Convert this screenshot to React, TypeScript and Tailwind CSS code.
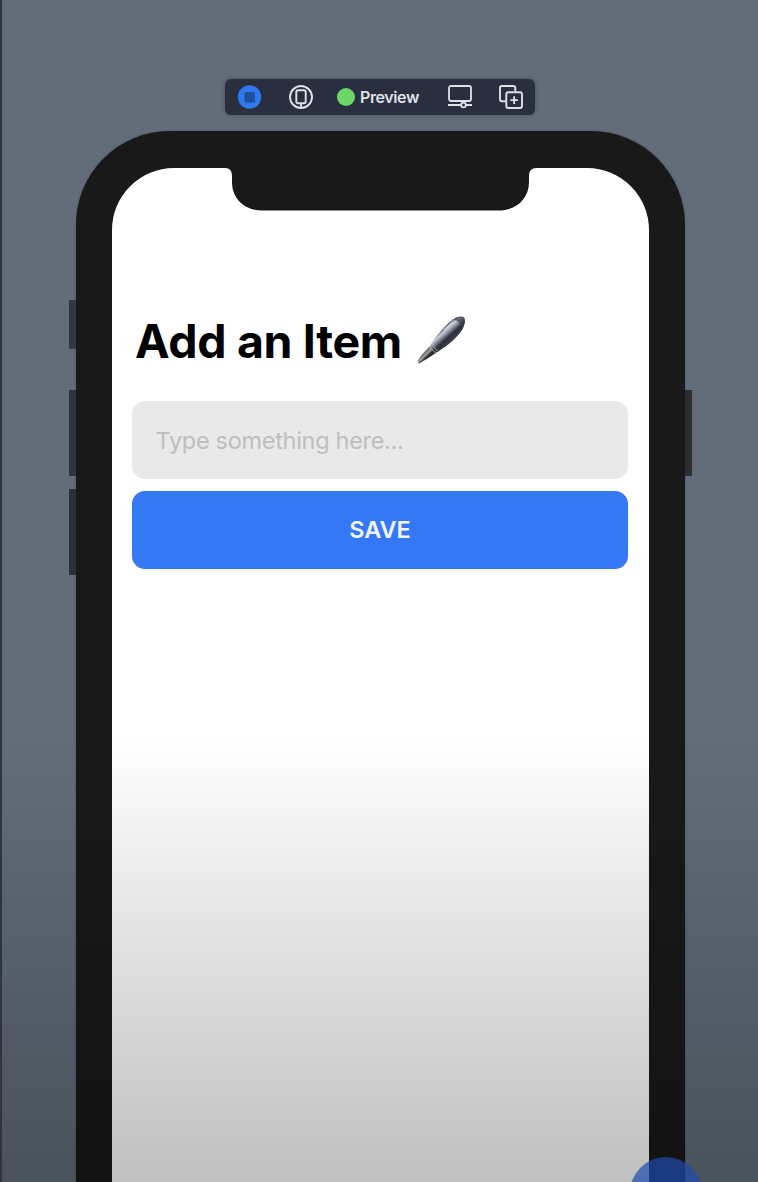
function Toolbar() {
  return (
    <div className="flex h-[36px] w-[310px] shrink-0 items-center rounded-[6px] bg-[#2a2f3f] pl-[12px] shadow-[0_0_4px_rgba(42,47,63,0.5)]">
      <svg width="25" height="26" viewBox="0 0 25 26" className="shrink-0">
        <circle cx="12.5" cy="13" r="11.7" fill="#2f78ee" />
        <rect x="7.5" y="8" width="10.5" height="10.5" rx="1" fill="#1f4f9f" />
      </svg>
      <svg width="26" height="26" viewBox="0 0 26 26" fill="none" stroke="#dfe1e7" strokeWidth="1.9" className="ml-[26px] shrink-0">
        <circle cx="13" cy="13" r="11" />
        <rect x="8.3" y="6.2" width="9.4" height="13" rx="1.8" />
        <path d="M13 19v5" />
      </svg>
      <div className="ml-[23px] flex w-[82px] shrink-0 items-center gap-[5px]">
        <span className="size-[18px] shrink-0 rounded-full bg-[#6ed569]" />
        <span className="font-['Inter',sans-serif] text-[16px] leading-[20px] font-semibold tracking-[-0.4px] text-[#dfe1e8]">Preview</span>
      </div>
      <svg width="26" height="26" viewBox="0 0 26 26" fill="none" stroke="#dfe1e7" strokeWidth="1.8" className="ml-[28px] shrink-0">
        <rect x="2" y="2" width="22" height="15" rx="2" />
        <path d="M1 21h13M19 21h6" />
        <circle cx="16.5" cy="21" r="2.4" />
      </svg>
      <svg width="26" height="26" viewBox="0 0 26 26" fill="none" stroke="#dfe1e7" strokeWidth="1.9" className="ml-[25px] shrink-0">
        <path d="M7.5 17.3H4a2 2 0 0 1-2-2V4a2 2 0 0 1 2-2h11.300a2 2 0 0 1 2 2v3.500" />
        <rect x="8.300" y="8.300" width="15.700" height="15.700" rx="2" />
        <path d="M16.150 12.300v7.700M12.300 16.150h7.700" />
      </svg>
    </div>
  );
}

function Pen() {
  return (
    <svg width="50" height="50" viewBox="0 0 50 50" className="shrink-0">
      <defs>
        <linearGradient id="barrel" gradientUnits="userSpaceOnUse" x1="23" y1="16" x2="33" y2="27">
          <stop offset="0" stopColor="#5f636f" />
          <stop offset="0.22" stopColor="#c9cedc" />
          <stop offset="0.45" stopColor="#7c808e" />
          <stop offset="0.68" stopColor="#2b2d39" />
          <stop offset="1" stopColor="#3c3e49" />
        </linearGradient>
        <linearGradient id="nib" gradientUnits="userSpaceOnUse" x1="7" y1="38" x2="12" y2="43">
          <stop offset="0" stopColor="#666666" />
          <stop offset="0.35" stopColor="#a4a4a4" />
          <stop offset="0.65" stopColor="#36363a" />
          <stop offset="1" stopColor="#202126" />
        </linearGradient>
      </defs>
      <path d="M13 31C19 22 27 11 36 4C41 0.500 46 -0.200 48 1.500C50 4.500 48.500 11 45 15.500C38 25 29 31.500 19 37.500Z" fill="url(#barrel)" />
      <path d="M37 3.500C41 0.500 46 -0.200 48 1.500C50 4.500 48.500 10 45 15C46 9 43 4.500 37 3.500Z" fill="#3a3e4b" opacity="0.7" />
      <path d="M13 31L19.500 37C14 41.500 8 44 3.500 47.500L1.500 47L2 44.500C5 39 8.500 36 13 31Z" fill="url(#nib)" />
      <path d="M13.500 30.500L19.600 37M15.500 28.500L21.500 35" stroke="#a5a5ac" strokeWidth="1" />
      <path d="M28 14L37 6" stroke="#e5e9f4" strokeWidth="1.500" opacity="0.65" />
    </svg>
  );
}

export default function App() {
  return (
    <div className="relative flex h-[1182px] w-[758px] flex-col items-center overflow-hidden border-l-2 border-[#303440] bg-[#626d79] pt-[79px]">
      <Toolbar />

      <div className="relative mt-[16px] h-[1100px] w-[609px] shrink-0 rounded-t-[94px] bg-[#191919] px-[36px] pt-[37px] shadow-[0_0_2px_rgba(45,50,62,0.6)]">
        <span className="absolute top-[169px] -left-[7px] h-[49px] w-[7px] bg-[#303841]" />
        <span className="absolute top-[259px] -left-[7px] h-[86px] w-[7px] bg-[#2c353e]" />
        <span className="absolute top-[358px] -left-[7px] h-[86px] w-[7px] bg-[#2c3037]" />
        <span className="absolute top-[259px] -right-[7px] h-[86px] w-[7px] bg-[#2b2d32]" />

        <div className="relative h-full rounded-t-[62px] bg-white px-[20.500px] pt-[148px] font-['Inter',sans-serif]">
          <svg className="absolute -top-px left-[113px]" width="312" height="44" viewBox="0 0 312 44">
            <path d="M0 0V1C5 1 7 4 7 9V15C7 32 20 43.500 37 43.500H274C291 43.500 304 32 304 15V9C304 4 306 1 312 1V0Z" fill="#191919" />
          </svg>
          <div className="flex h-[50px] items-center pl-[3px]">
            <h1 className="w-[281px] shrink-0 text-[46.500px] leading-[50px] font-bold tracking-[-0.350px] whitespace-nowrap text-black">Add an Item</h1>
            <Pen />
          </div>
          <div className="mt-[35px] flex h-[78px] items-center rounded-[13px] bg-[#e9e9e9] pt-[2px] pl-[23.500px]">
            <span className="text-[23.500px] tracking-[-0.300px] whitespace-nowrap text-[#bebebf]">Type something here...</span>
          </div>
          <button className="mt-[12px] flex h-[78px] w-full items-center justify-center rounded-[13px] bg-[#3478f6] text-[23.500px] font-semibold text-[#f0f5ff]">SAVE</button>
        </div>
      </div>

      <div className="pointer-events-none absolute -left-[2px] bottom-0 h-[447px] w-[758px] bg-linear-to-b from-black/0 to-black/25" />
      <span className="absolute top-[1157px] left-[628px] size-[72px] rounded-full bg-[#1f4aae]/70" />
    </div>
  );
}
